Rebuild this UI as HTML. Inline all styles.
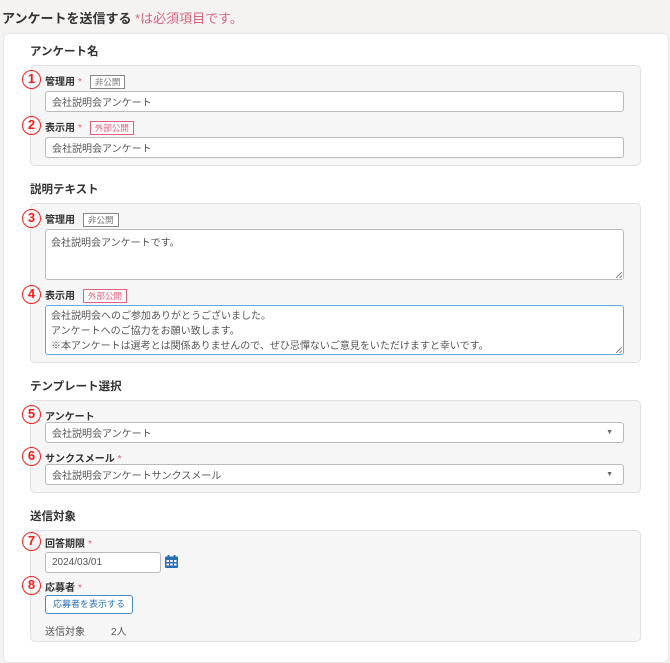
<!DOCTYPE html>
<html><head><meta charset="utf-8"><style>
*{box-sizing:border-box;margin:0;padding:0}
body{width:670px;height:649px;overflow:hidden;background:#f4f3f2;font-family:"Liberation Sans","Noto Sans CJK JP",sans-serif;color:#222;position:relative}
.a{position:absolute}
.title{left:2px;top:8px;font-size:13px;font-weight:bold;color:#333}
.title span{color:#d9657f;font-weight:normal}
.card{left:3px;top:33px;width:666px;height:630px;background:#fff;border:1px solid #e6e6e6;border-radius:6px}
.h{left:30px;font-size:11.5px;font-weight:bold;color:#333}
.box{left:30px;width:611px;background:#f6f6f6;border:1px solid #e0e0e0;border-radius:5px}
.num{width:19px;height:19px;border:1.5px solid #f02020;border-radius:50%;color:#f02020;font-size:13px;font-weight:bold;text-align:center;line-height:16px;left:22px}
.lb{left:45px;font-size:10px;font-weight:bold;color:#333}
.lb i{color:#e0607a;font-style:normal;font-weight:normal;margin-left:3px}
.tag{font-size:8.5px;padding:1px 4px;border:1px solid #888;color:#777;font-weight:normal;margin-left:8px;background:#fff}
.tag.r{border-color:#e0607a;color:#e0607a}
.in{left:45px;width:579px;background:#fff;border:1px solid #bbb;border-radius:3px;font-size:10px;color:#555;padding:0 6px;display:flex;align-items:center}
.ta{display:block;line-height:15px;padding:6px 5px 0}
.arr{position:absolute;right:10px;top:6px;font-size:7px;color:#666}
.rs{position:absolute;right:1px;bottom:1px;width:6px;height:6px;background:linear-gradient(135deg,transparent 45%,#888 45%,#888 55%,transparent 55%,transparent 75%,#888 75%,#888 85%,transparent 85%)}
</style></head><body>
<div class="a title">アンケートを送信する <span>*は必須項目です。</span></div>
<div class="a card"></div>

<div class="a h" style="top:43px">アンケート名</div>
<div class="a box" style="top:65px;height:101px"></div>
<div class="a num" style="top:70px">1</div>
<div class="a lb" style="top:73px">管理用<i>*</i><span class="tag">非公開</span></div>
<div class="a in" style="top:91px;height:21px">会社説明会アンケート</div>
<div class="a num" style="top:116px">2</div>
<div class="a lb" style="top:119px">表示用<i>*</i><span class="tag r">外部公開</span></div>
<div class="a in" style="top:137px;height:21px">会社説明会アンケート</div>

<div class="a h" style="top:181px">説明テキスト</div>
<div class="a box" style="top:203px;height:160px"></div>
<div class="a num" style="top:209px">3</div>
<div class="a lb" style="top:211px">管理用<span class="tag">非公開</span></div>
<div class="a in ta" style="top:229px;height:51px">会社説明会アンケートです。<span class="rs"></span></div>
<div class="a num" style="top:285px">4</div>
<div class="a lb" style="top:287px">表示用<span class="tag r">外部公開</span></div>
<div class="a in ta" style="top:305px;height:50px;border-color:#6aa8e0;padding-top:3px">会社説明会へのご参加ありがとうございました。<br>アンケートへのご協力をお願い致します。<br>※本アンケートは選考とは関係ありませんので、ぜひ忌憚ないご意見をいただけますと幸いです。<span class="rs"></span></div>

<div class="a h" style="top:378px">テンプレート選択</div>
<div class="a box" style="top:400px;height:93px"></div>
<div class="a num" style="top:405px">5</div>
<div class="a lb" style="top:408px">アンケート</div>
<div class="a in" style="top:422px;height:21px">会社説明会アンケート<span class="arr">▼</span></div>
<div class="a num" style="top:447px">6</div>
<div class="a lb" style="top:450px">サンクスメール<i>*</i></div>
<div class="a in" style="top:464px;height:21px">会社説明会アンケートサンクスメール<span class="arr">▼</span></div>

<div class="a h" style="top:508px">送信対象</div>
<div class="a box" style="top:530px;height:112px"></div>
<div class="a num" style="top:532px">7</div>
<div class="a lb" style="top:535px">回答期限<i>*</i></div>
<div class="a in" style="top:552px;height:21px;width:116px">2024/03/01</div>
<svg class="a" style="left:165px;top:555px" width="13" height="13" viewBox="0 0 13 13"><rect x="0" y="1.5" width="13" height="11.5" rx="1" fill="#2a6fb5"/><rect x="2.5" y="0" width="2" height="3" fill="#2a6fb5"/><rect x="8.5" y="0" width="2" height="3" fill="#2a6fb5"/><g fill="#fff"><rect x="1.5" y="5" width="2.5" height="2"/><rect x="5.2" y="5" width="2.5" height="2"/><rect x="9" y="5" width="2.5" height="2"/><rect x="1.5" y="8.5" width="2.5" height="2"/><rect x="5.2" y="8.5" width="2.5" height="2"/><rect x="9" y="8.5" width="2.5" height="2"/></g></svg>
<div class="a num" style="top:576px">8</div>
<div class="a lb" style="top:579px">応募者<i>*</i></div>
<div class="a" style="left:45px;top:595px;width:88px;height:19px;border:1px solid #4a8ac8;border-radius:3px;background:#fff;color:#2a6fb5;font-size:9px;text-align:center;line-height:17px">応募者を表示する</div>
<div class="a" style="left:45px;top:623px;font-size:10px;color:#555">送信対象</div>
<div class="a" style="left:111px;top:623px;font-size:10px;color:#555">2人</div>
</body></html>
